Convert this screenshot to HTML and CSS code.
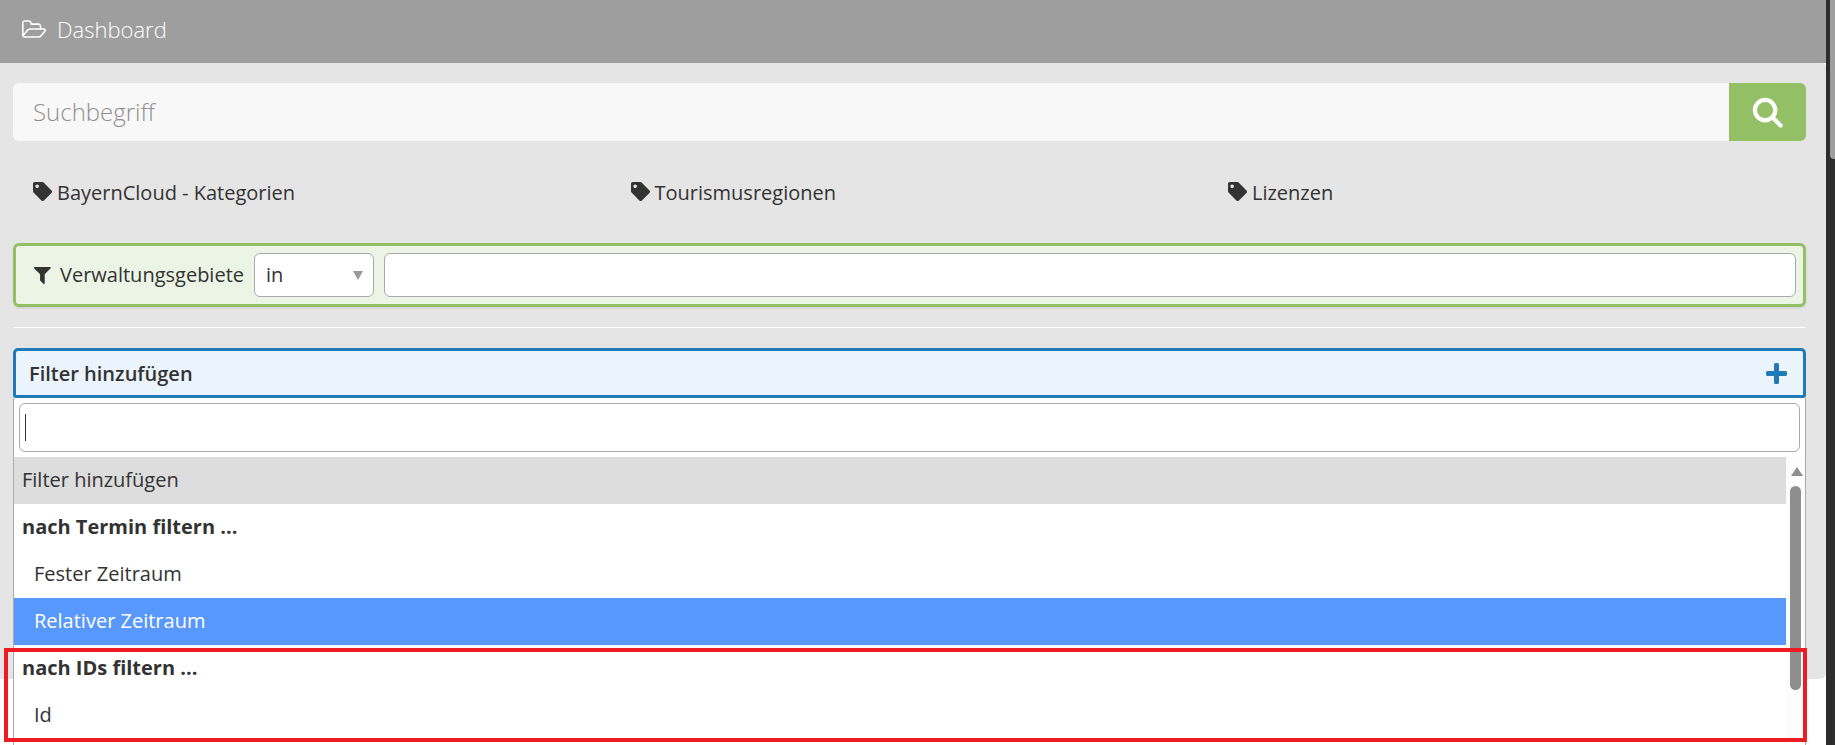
FILE: index.html
```html
<!DOCTYPE html>
<html lang="de">
<head>
<meta charset="utf-8">
<title>Dashboard</title>
<link rel="stylesheet" href="styles.css">
</head>
<body>
<div class="app">
  <main class="page">
    <header class="topbar">
      <svg class="folder" viewBox="0 128 1909 1408"><path fill="currentColor" d="M1781 931q0-35-53-35h-1088q-40 0-85.5 21.5t-71.5 52.5l-294 363q-18 24-18 40 0 35 53 35h1088q40 0 86-22t71-53l294-363q18-22 18-39zm-1141-163h768v-160q0-40-28-68t-68-28h-576q-40 0-68-28t-28-68v-64q0-40-28-68t-68-28h-320q-40 0-68 28t-28 68v853l256-315q44-53 116-87.5t140-34.5zm1269 163q0 62-46 120l-295 363q-43 53-116 87.5t-140 34.5h-1088q-92 0-158-66t-66-158v-960q0-92 66-158t158-66h320q92 0 158 66t66 158v32h544q92 0 158 66t66 158v160h192q54 0 99 24.5t67 70.5q15 32 15 68z"/></svg>
      <span class="title">Dashboard</span>
    </header>
    <section class="panel">
      <div class="search">
        <div class="search-field">Suchbegriff</div>
        <button class="search-btn" type="button">
          <svg viewBox="0 0 32 32"><circle cx="13.5" cy="13.5" r="10.5" fill="none" stroke="currentColor" stroke-width="4.4"/><path d="M21 21l8.5 8.5" stroke="currentColor" stroke-width="4.4" stroke-linecap="round"/></svg>
        </button>
      </div>
      <div class="tags">
        <div class="tag"><svg viewBox="0 0 512 512"><path fill="currentColor" d="M0 252.118V48C0 21.49 21.49 0 48 0h204.118a48 48 0 0 1 33.941 14.059l211.882 211.882c18.745 18.745 18.745 49.137 0 67.882L293.823 497.941c-18.745 18.745-49.137 18.745-67.882 0L14.059 286.059A48 48 0 0 1 0 252.118zM112 64c-26.51 0-48 21.49-48 48s21.49 48 48 48 48-21.49 48-48-21.49-48-48-48z"/></svg><span>BayernCloud - Kategorien</span></div>
        <div class="tag"><svg viewBox="0 0 512 512"><path fill="currentColor" d="M0 252.118V48C0 21.49 21.49 0 48 0h204.118a48 48 0 0 1 33.941 14.059l211.882 211.882c18.745 18.745 18.745 49.137 0 67.882L293.823 497.941c-18.745 18.745-49.137 18.745-67.882 0L14.059 286.059A48 48 0 0 1 0 252.118zM112 64c-26.51 0-48 21.49-48 48s21.49 48 48 48 48-21.49 48-48-21.49-48-48-48z"/></svg><span>Tourismusregionen</span></div>
        <div class="tag"><svg viewBox="0 0 512 512"><path fill="currentColor" d="M0 252.118V48C0 21.49 21.49 0 48 0h204.118a48 48 0 0 1 33.941 14.059l211.882 211.882c18.745 18.745 18.745 49.137 0 67.882L293.823 497.941c-18.745 18.745-49.137 18.745-67.882 0L14.059 286.059A48 48 0 0 1 0 252.118zM112 64c-26.51 0-48 21.49-48 48s21.49 48 48 48 48-21.49 48-48-21.49-48-48-48z"/></svg><span>Lizenzen</span></div>
      </div>
      <div class="filter">
        <svg class="funnel" viewBox="128 256 1472 1408"><path fill="currentColor" d="M1595 295q17 41-14 70l-493 493v742q0 42-39 59-13 5-25 5-27 0-45-19l-256-256q-19-19-19-45v-486l-493-493q-31-29-14-70 17-39 59-39h1280q42 0 59 39z"/></svg>
        <span class="filter-label">Verwaltungsgebiete</span>
        <div class="select"><span class="select-value">in</span><i class="caret"></i></div>
        <div class="filter-input"></div>
      </div>
      <div class="rule"></div>
      <div class="add">
        <div class="add-bar">
          <strong>Filter hinzufügen</strong>
          <svg class="plus" viewBox="0 0 21 21"><path fill="currentColor" d="M8 1.5A1.5 1.5 0 0 1 9.5 0h2A1.500 1.500 0 0 1 13 1.500V8h6.500A1.500 1.500 0 0 1 21 9.500v2a1.500 1.500 0 0 1-1.500 1.500H13v6.500a1.500 1.500 0 0 1-1.500 1.500h-2A1.500 1.500 0 0 1 8 19.500V13H1.500A1.500 1.500 0 0 1 0 11.500v-2A1.500 1.500 0 0 1 1.500 8H8z"/></svg>
        </div>
        <div class="menu">
          <div class="menu-search"><i class="cursor"></i></div>
          <div class="menu-body">
            <ul class="options">
              <li class="opt current">Filter hinzufügen</li>
              <li class="opt group">nach Termin filtern ...</li>
              <li class="opt child">Fester Zeitraum</li>
              <li class="opt child active">Relativer Zeitraum</li>
              <li class="opt group">nach IDs filtern ...</li>
              <li class="opt child">Id</li>
            </ul>
            <div class="menu-scroll">
              <i class="arrow"></i>
              <i class="thumb"></i>
            </div>
          </div>
        </div>
      </div>
    </section>
  </main>
  <aside class="rail"><i class="rail-thumb"></i></aside>
</div>
<div class="annotation"></div>
</body>
</html>
```
FILE: styles.css
```css
* { box-sizing: border-box; }
html, body { margin: 0; height: 745px; overflow: hidden; background: #fff; }
body { font-family: "Open Sans", "Liberation Sans", sans-serif; font-size: 20px; color: #333; }
.app { display: flex; height: 745px; }
.page { width: 1826px; flex: none; }
.rail { flex: 1; background: #2d2d2d; padding-left: 4px; }
.rail-thumb { display: block; height: 159px; background: #9e9e9e; border-radius: 0 0 0 4px; }

.topbar { height: 63px; background: #9e9e9e; color: #fff; display: flex; align-items: center; padding-left: 22px; }
.folder { width: 24px; height: 18px; margin-right: 11px; margin-top: -6px; }
.title { font-weight: 300; font-size: 22px; line-height: 1; margin-top: -6px; }

.panel { height: 616px; background: #e5e5e5; padding: 20px 20px 0 13px; border-radius: 0 4px 6px 0; }

.search { display: flex; height: 58px; }
.search-field { flex: 1; background: #f8f8f8; border-radius: 6px 0 0 6px; padding-left: 20px; font-size: 24px; font-weight: 300; line-height: 58px; color: #8f8f8f; }
.search-btn { width: 77px; border: 0; padding: 0; background: #93c064; color: #fff; border-radius: 0 6px 6px 0; display: flex; align-items: center; justify-content: center; }
.search-btn svg { width: 31px; height: 31px; }

.tags { height: 102px; display: grid; grid-template-columns: repeat(3, 597.5px); align-items: center; padding-left: 20px; padding-top: 1px; }
.tag { display: flex; align-items: center; color: #333; }
.tag svg { width: 19px; height: 19px; margin-right: 5px; margin-top: -2px; flex: none; }

.filter { height: 64px; border: 3px solid #93c064; border-radius: 6px; background: #ecf4e5; display: flex; align-items: center; padding: 0 7px 0 17px; box-shadow: 0 1px 2px rgba(0,0,0,.12); }
.funnel { width: 18px; height: 17px; margin-right: 9px; }
.filter-label { margin-right: 10px; margin-top: -2px; }
.select { width: 120px; height: 44px; background: #fff; border: 1px solid #aaa; border-radius: 6px; display: flex; align-items: center; justify-content: space-between; padding: 0 10px 0 11px; margin-right: 10px; }
.select-value { margin-top: -2px; }
.caret { width: 0; height: 0; border-left: 5px solid transparent; border-right: 5px solid transparent; border-top: 9px solid #999; }
.filter-input { flex: 1; height: 44px; background: #fff; border: 1px solid #aaa; border-radius: 6px; }

.rule { height: 2px; margin-top: 20px; border-top: 1px solid #fff; border-radius: 4px 4px 0 0; }

.add { margin-top: 19px; position: relative; }
.add-bar { height: 50px; background: #ebf4fc; border: 3px solid #1f7ab8; border-radius: 5px 5px 3px 3px; display: flex; align-items: center; justify-content: space-between; padding: 0 16px 0 13px; }
.add-bar strong { font-weight: 600; }
.plus { width: 21px; height: 21px; color: #1f7ab8; }

.menu { position: absolute; left: 0; right: 0; top: 50px; background: #fff; border: 1px solid #aaa; border-width: 0 1px; height: 360px; }
.menu-search { margin: 5px 5px 5px; height: 49px; border: 1px solid #aaa; border-radius: 6px; padding: 10px 0 0 5px; background: #fff; }
.cursor { display: block; width: 1px; height: 27px; background: #333; }
.menu-body { display: flex; height: 282px; }
.options { flex: none; width: 1772px; margin: 0; padding: 0; list-style: none; }
.opt { height: 47px; line-height: 45px; padding-left: 8px; background: #fff; }
.current { background: #ddd; }
.group { font-weight: 700; }
.child { padding-left: 20px; }
.active { background: #5897fb; color: #fff; }
.menu-scroll { flex: 1; background: #fcfcfc; position: relative; padding: 10px 2px 0 4px; }
.arrow { display: block; width: 0; height: 0; margin: 0 auto; border-left: 6px solid transparent; border-right: 6px solid transparent; border-bottom: 9px solid #8e8e8e; }
.thumb { display: block; width: 11px; height: 204px; margin-top: 10px; background: #8e8e8e; border-radius: 6px; }

.annotation { position: absolute; left: 4px; top: 648px; width: 1803px; height: 94px; border: 4px solid #ed1c24; }
```
